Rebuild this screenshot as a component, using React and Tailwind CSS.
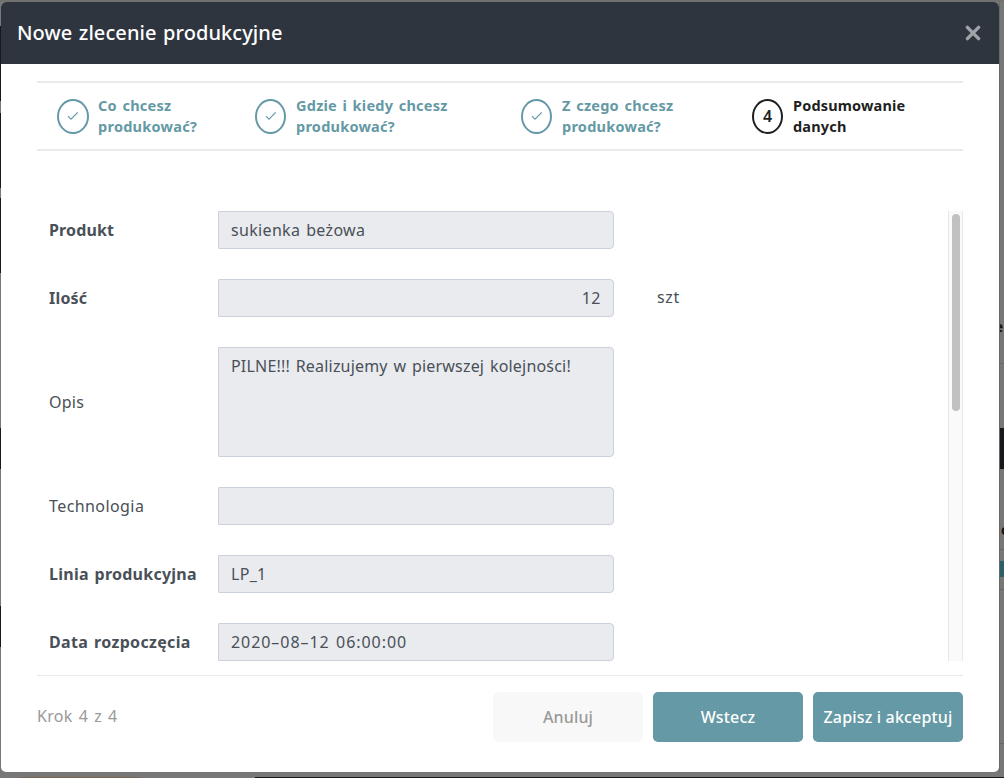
import React from "react";

const steps = [
  { lines: ["Co chcesz", "produkować?"], done: true, width: "w-[198px]", circle: "w-8", track: "tracking-[0.26px]" },
  { lines: ["Gdzie i kiedy chcesz", "produkować?"], done: true, width: "w-[266px]", circle: "w-[31px] mr-px", track: "tracking-[0.24px]" },
  { lines: ["Z czego chcesz", "produkować?"], done: true, width: "w-[231px]", circle: "w-[31px] mr-px", track: "tracking-[0.25px]" },
  { lines: ["Podsumowanie", "danych"], done: false, width: "w-[200px]", circle: "w-[31px] mr-px", track: "tracking-[0.17px]" },
];

const fields = [
  { label: "Produkt", value: "sukienka beżowa", bold: true, labelTrack: "tracking-[0.15px]", valueTrack: "tracking-[0.33px]" },
  { label: "Ilość", value: "12", bold: true, right: true, unit: "szt", labelTrack: "tracking-[0.2px]", valueTrack: "tracking-[0.5px]" },
  { label: "Opis", value: "PILNE!!! Realizujemy w pierwszej kolejności!", tall: true, labelTrack: "tracking-[0.25px]", valueTrack: "tracking-[0.19px]" },
  { label: "Technologia", value: "", labelTrack: "tracking-[0.42px]", valueTrack: "" },
  { label: "Linia produkcyjna", value: "LP_1", bold: true, labelTrack: "tracking-[0.25px]", valueTrack: "tracking-[0.3px]" },
  { label: "Data rozpoczęcia", value: "2020–08–12 06:00:00", bold: true, labelTrack: "tracking-[0.34px]", valueTrack: "tracking-[0.94px]" },
];

function Step({ step, index }) {
  return (
    <li className={`flex shrink-0 items-center gap-[9px] ${step.width} ${step.done ? "text-[#6499a5]" : "text-[#1d1f22]"}`}>
      <span className={`flex h-[35px] shrink-0 items-center justify-center rounded-[50%] border-2 border-current text-base font-semibold ${step.circle}`}>
        {step.done ? (
          <svg width="12" height="10" viewBox="0 0 12 10" fill="none" stroke="currentColor" strokeWidth="1.2">
            <path d="M1 5.2 L4 8.2 L10.7 1.3" />
          </svg>
        ) : (
          index + 1
        )}
      </span>
      <span className={`text-[14.5px] leading-[21px] font-bold whitespace-nowrap [word-spacing:1.5px] ${step.track}`}>
        {step.lines.map((line) => (
          <span key={line} className="block">{line}</span>
        ))}
      </span>
    </li>
  );
}

function Field({ field }) {
  return (
    <div className="flex items-center [word-spacing:1.4px]">
      <div className={`w-[181px] shrink-0 pl-3 text-base whitespace-nowrap ${field.labelTrack} ${field.bold ? "font-bold" : ""}`}>{field.label}</div>
      <div
        className={`w-[396px] shrink-0 rounded-r-[4px] rounded-l-[1px] border border-[#cbd2da] bg-[#e9ebef] px-3 pt-[6px] text-base leading-6 whitespace-nowrap ${field.valueTrack} ${field.tall ? "h-[110px]" : "h-[38px]"} ${field.right ? "text-right" : ""}`}
      >
        {field.value}
      </div>
      {field.unit && <div className="ml-[43px] pb-[2px] text-base tracking-[0.6px]">{field.unit}</div>}
    </div>
  );
}

export default function App() {
  return (
    <div className="flex h-[778px] w-[1004px] flex-col overflow-hidden bg-[#777776] font-['Noto_Sans',sans-serif] text-[#495057]">
      <div className="h-[2px] shrink-0 bg-[#71716f]" />
      <div className="flex h-[770px] shrink-0">
        <div className="flex w-px shrink-0 flex-col bg-[#777]">
          <div className="h-6" />
          <div className="h-[75px] bg-[#15181c]" />
          <div className="h-3" />
          <div className="h-[75px] bg-[#15181c]" />
          <div className="h-[10px]" />
          <div className="h-[75px] bg-[#15181c]" />
          <div className="h-[155px]" />
          <div className="h-[41px] bg-[#15181c]" />
          <div className="h-[137px]" />
          <div className="h-[41px] bg-[#15181c]" />
        </div>

        <div className="flex w-[998px] shrink-0 flex-col overflow-hidden rounded-[5px] bg-white">
          <header className="flex h-[62px] shrink-0 items-center justify-between bg-[#2f353f] pr-[18px] pl-4">
            <h1 className="text-[20px] font-medium tracking-[0.08px] whitespace-nowrap text-white [word-spacing:1.2px]">Nowe zlecenie produkcyjne</h1>
            <svg width="16" height="16" viewBox="0 0 16 16" stroke="#a0a3a7" strokeWidth="3.4" strokeLinecap="round">
              <path d="M2.4 2.4 L13.6 13.6 M13.6 2.4 L2.4 13.6" />
            </svg>
          </header>

          <main className="flex flex-col pr-9 pl-9">
            <ol className="mt-[17px] flex h-[70px] items-center border-y-2 border-[#ebebeb] pl-5">
              {steps.map((s, i) => (
                <Step key={i} step={s} index={i} />
              ))}
            </ol>

            <div className="mt-[60px] flex h-[450px] justify-between">
              <div className="flex flex-col gap-[30px]">
                {fields.map((f) => (
                  <Field key={f.label} field={f} />
                ))}
              </div>
              <div className="w-[15px] border-x border-[#e8e8e8] bg-[#fafafa] pt-[3px] pl-[3px]">
                <div className="h-[197px] w-2 rounded-full bg-[#c1c1c1]" />
              </div>
            </div>

            <footer className="mt-[14px] flex justify-between border-t border-[#e9e9e9] pt-4">
              <span className="pt-3 text-base tracking-[0.3px] text-[#999] [word-spacing:1.6px]">Krok 4 z 4</span>
              <div className="flex gap-[10px] text-base font-medium tracking-[0.17px] whitespace-nowrap [word-spacing:1.4px]">
                <button className="h-[50px] w-[150px] rounded-[5px] bg-[#f8f8f8] text-[#999]">Anuluj</button>
                <button className="h-[50px] w-[150px] rounded-[5px] bg-[#6499a5] text-white">Wstecz</button>
                <button className="h-[50px] w-[150px] rounded-[5px] bg-[#6499a5] text-white">Zapisz i akceptuj</button>
              </div>
            </footer>
          </main>
        </div>

        <div className="flex w-[5px] shrink-0 flex-col overflow-hidden border-l border-[#686868] text-sm leading-4 font-bold text-[#111]">
          <div className="h-[317px]" />
          <div className="flex h-[44px] w-[3px] justify-end overflow-hidden">e</div>
          <div className="h-px bg-[#686868]" />
          <div className="h-16" />
          <div className="h-[41px] bg-[#15181c]" />
          <div className="h-[53px]" />
          <div className="h-[27px] overflow-hidden pl-px">o</div>
          <div className="h-px bg-[#666]" />
          <div className="h-[11px]" />
          <div className="h-4 bg-[#2b6069]" />
          <div className="h-3" />
          <div className="h-px bg-[#666]" />
          <div className="h-[153px]" />
          <div className="h-px bg-[#666]" />
        </div>
      </div>
      <div className="h-[5px] shrink-0 bg-[#777]" />
      <div className="flex h-px shrink-0 bg-[#16181c]">
        <div className="w-5 bg-[#777]" />
        <div className="w-[120px] bg-[#7a6650]" />
        <div className="w-[115px] bg-[#777]" />
      </div>
    </div>
  );
}
